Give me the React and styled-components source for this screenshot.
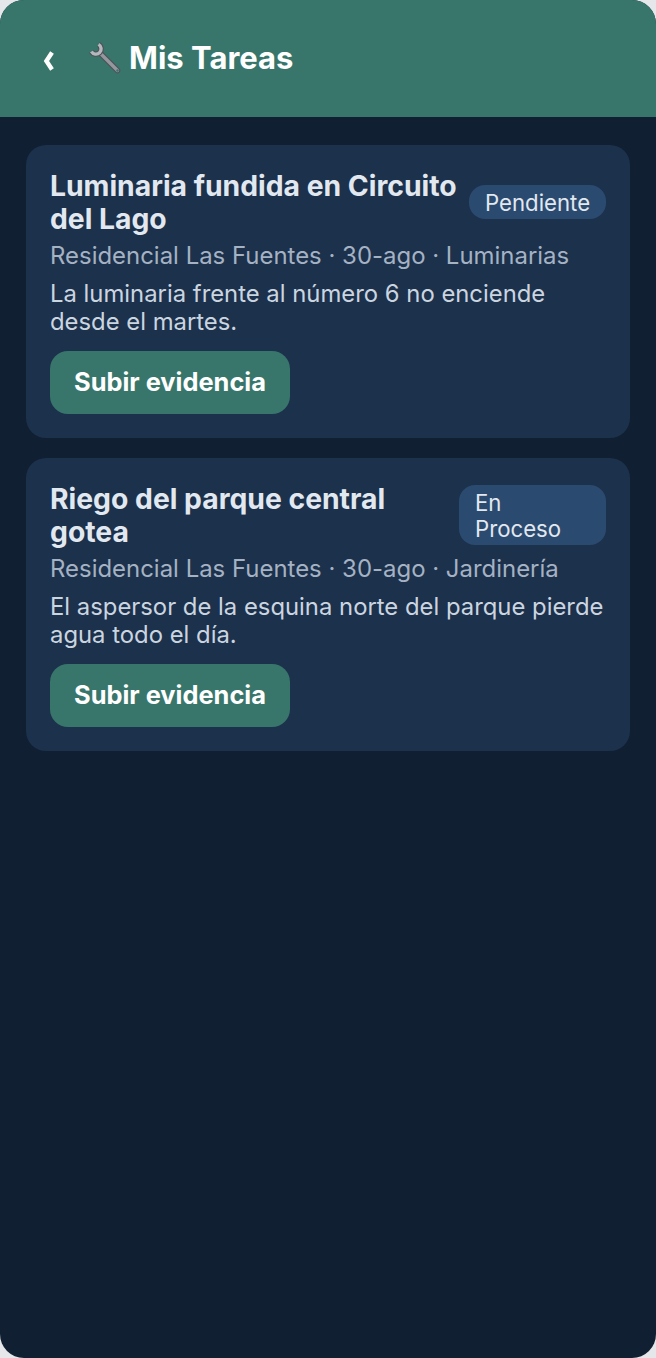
import React from 'react';
import styled, { createGlobalStyle } from 'styled-components';

const Global = createGlobalStyle`
  html, body { margin: 0; padding: 0; background: #e5e7eb; }
  body { font-family: Inter, "Liberation Sans", sans-serif; }
`;

const Phone = styled.div`
  width: 656px;
  height: 1358px;
  border-radius: 24px;
  overflow: hidden;
  background: #101f31;
  display: flex;
  flex-direction: column;
`;

const Header = styled.header`
  height: 117px;
  flex: none;
  box-sizing: border-box;
  background: #38766c;
  display: flex;
  align-items: center;
  padding-left: 42px;
  color: #ffffff;
`;

const BackButton = styled.span`
  width: 46px;
  display: flex;
  align-items: center;
  margin-top: 4px;
`;

const Title = styled.h1`
  margin: 0 0 2px;
  font-size: 31px;
  font-weight: 700;
  display: flex;
  align-items: center;
  gap: 7px;
`;

const List = styled.main`
  display: flex;
  flex-direction: column;
  gap: 20px;
  padding: 28px 26px;
`;

const Card = styled.article`
  background: #1c314b;
  border-radius: 20px;
  padding: 24px;
`;

const CardTop = styled.div`
  display: flex;
  align-items: center;
  justify-content: space-between;
  gap: 12px;
`;

const CardTitle = styled.h2`
  margin: 0;
  padding: 1px 0;
  font-size: 28.3px;
  line-height: 33px;
  font-weight: 700;
  color: #e2e8f0;
`;

const Badge = styled.span`
  flex: none;
  box-sizing: border-box;
  width: ${p => p.$width}px;
  margin-bottom: 2px;
  padding: 5px 16px 3px;
  border-radius: 16px;
  background: #2b4a6f;
  color: #e2e8f0;
  font-size: 22.2px;
  line-height: 26px;
`;

const Meta = styled.div`
  margin-top: 5px;
  font-size: 23.95px;
  line-height: 28px;
  color: #a5b2c4;
`;

const Description = styled.p`
  margin: 10px 0 0;
  font-size: 23.85px;
  line-height: 28px;
  color: #cbd5e0;
`;

const UploadButton = styled.button`
  display: block;
  margin-top: 15px;
  width: 240px;
  height: 63px;
  padding: 0 0 2px;
  border: none;
  border-radius: 18px;
  background: #38766c;
  color: #ffffff;
  font-family: inherit;
  font-size: 25.4px;
  font-weight: 700;
`;

const Chevron = () => (
  <svg width="14" height="22" viewBox="0 0 14 22">
    <path d="M10 2.5 L4.4 11 L10 19.5" fill="none" stroke="#fff" strokeWidth="4.4" />
  </svg>
);

const Wrench = () => (
  <svg width="34" height="34" viewBox="0 0 34 34">
    <path d="M12.5 12.5 L29.5 29.5" stroke="#4e5157" strokeWidth="5.6" strokeLinecap="round" />
    <path d="M12.5 12.5 L29.5 29.5" stroke="#94979e" strokeWidth="3.4" strokeLinecap="round" />
    <path d="M10.5 3.4 A5.2 5.2 0 1 1 3.4 10.5" fill="none" stroke="#4e5157" strokeWidth="5.4" />
    <path d="M10.5 3.4 A5.2 5.2 0 1 1 3.4 10.5" fill="none" stroke="#b4b7bd" strokeWidth="3.4" />
    <circle cx="29.5" cy="29.5" r="1.2" fill="#38766c" />
  </svg>
);

const tasks = [
  {
    title: 'Luminaria fundida en Circuito del Lago',
    status: 'Pendiente',
    badgeWidth: 137,
    meta: 'Residencial Las Fuentes · 30-ago · Luminarias',
    text: 'La luminaria frente al número 6 no enciende desde el martes.',
  },
  {
    title: 'Riego del parque central gotea',
    status: 'En Proceso',
    badgeWidth: 147,
    meta: 'Residencial Las Fuentes · 30-ago · Jardinería',
    text: 'El aspersor de la esquina norte del parque pierde agua todo el día.',
  },
];

export default function App() {
  return (
    <Phone>
      <Global />
      <Header>
        <BackButton><Chevron /></BackButton>
        <Title><Wrench />Mis Tareas</Title>
      </Header>
      <List>
        {tasks.map(task => (
          <Card key={task.title}>
            <CardTop>
              <CardTitle>{task.title}</CardTitle>
              <Badge $width={task.badgeWidth}>{task.status}</Badge>
            </CardTop>
            <Meta>{task.meta}</Meta>
            <Description>{task.text}</Description>
            <UploadButton>Subir evidencia</UploadButton>
          </Card>
        ))}
      </List>
    </Phone>
  );
}
